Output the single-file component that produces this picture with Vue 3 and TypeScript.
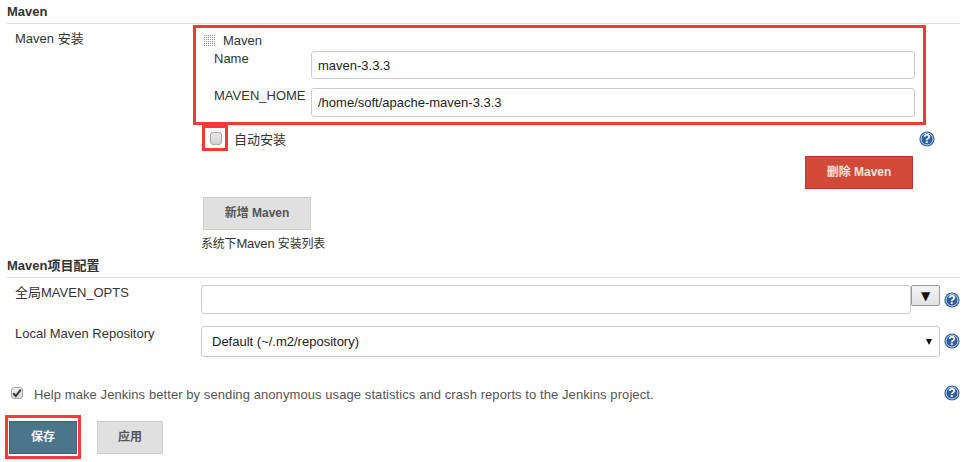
<script setup lang="ts">
const dots = Array.from({ length: 36 }, (_, i) => ({ x: (i % 6) * 2, y: Math.floor(i / 6) * 2 + 1 }))
</script>

<template>
  <div class="page">
    <div class="section-title first">Maven</div>

    <div class="install">
      <div class="row-label install-label">Maven 安装</div>
      <div class="install-body">
        <div class="red-box">
          <div class="tool-head">
            <svg class="handle" width="12" height="13" viewBox="0 0 12 13">
              <rect v-for="(d, i) in dots" :key="i" :x="d.x" :y="d.y" width="1" height="1" fill="#8f8f8f" />
            </svg>
            <span>Maven</span>
          </div>
          <div class="tool-row name-row">
            <label class="tool-label">Name</label>
            <input class="text-input" value="maven-3.3.3" />
          </div>
          <div class="tool-row home-row">
            <label class="tool-label">MAVEN_HOME</label>
            <input class="text-input" value="/home/soft/apache-maven-3.3.3" />
          </div>
        </div>

        <div class="auto-row">
          <span class="check-mark"><span class="fake-check"></span></span>
          <span class="auto-text">自动安装</span>
          <svg class="help" viewBox="0 0 16 16">
            <circle cx="8" cy="8" r="7.6" fill="#2f5f9e" />
            <circle cx="8" cy="8" r="6" fill="none" stroke="#c8d6ea" stroke-width="1" />
            <text x="8" y="12.4" text-anchor="middle" class="q">?</text>
          </svg>
        </div>

        <div class="delete-row">
          <button class="btn danger">删除 Maven</button>
        </div>

        <button class="btn neutral add">新增 Maven</button>
        <div class="hint"><span class="small">系统下</span>Maven <span class="small">安装列表</span></div>
      </div>
    </div>

    <div class="section-title second">Maven项目配置</div>

    <div class="cfg-row opts-row">
      <div class="row-label">全局MAVEN_OPTS</div>
      <input class="text-input opts-input" />
      <button class="expand">▼</button>
      <svg class="help side" viewBox="0 0 16 16">
        <circle cx="8" cy="8" r="7.6" fill="#2f5f9e" />
        <circle cx="8" cy="8" r="6" fill="none" stroke="#c8d6ea" stroke-width="1" />
        <text x="8" y="12.4" text-anchor="middle" class="q">?</text>
      </svg>
    </div>

    <div class="cfg-row repo-row">
      <div class="row-label">Local Maven Repository</div>
      <div class="fake-select">
        <span>Default (~/.m2/repository)</span>
        <span class="caret"></span>
      </div>
      <svg class="help side" viewBox="0 0 16 16">
        <circle cx="8" cy="8" r="7.6" fill="#2f5f9e" />
        <circle cx="8" cy="8" r="6" fill="none" stroke="#c8d6ea" stroke-width="1" />
        <text x="8" y="12.4" text-anchor="middle" class="q">?</text>
      </svg>
    </div>

    <div class="stats-row">
      <span class="stat-check">
        <svg width="10" height="10" viewBox="0 0 10 10">
          <path d="M1.2 5.2 L3.8 8 L8.8 1.6" fill="none" stroke="#333" stroke-width="2" />
        </svg>
      </span>
      <span class="stats-text">Help make Jenkins better by sending anonymous usage statistics and crash reports to the Jenkins project.</span>
      <svg class="help side" viewBox="0 0 16 16">
        <circle cx="8" cy="8" r="7.6" fill="#2f5f9e" />
        <circle cx="8" cy="8" r="6" fill="none" stroke="#c8d6ea" stroke-width="1" />
        <text x="8" y="12.4" text-anchor="middle" class="q">?</text>
      </svg>
    </div>

    <div class="actions">
      <div class="save-box"><button class="btn primary">保存</button></div>
      <button class="btn neutral apply">应用</button>
    </div>
  </div>
</template>

<style>
html, body { background: #fff; margin: 0; }
</style>

<style scoped>
.page {
  width: 960px;
  height: 462px;
  box-sizing: border-box;
  padding-left: 7px;
  overflow: hidden;
  font-family: "Liberation Sans", "Noto Sans CJK SC", sans-serif;
  font-size: 13px;
  color: #333;
}
.section-title {
  font-weight: 700;
  border-bottom: 1px solid #ddd;
  color: #333;
  box-sizing: border-box;
}
.first { height: 24px; line-height: 24px; }
.second { height: 22px; line-height: 20px; margin-top: 4px; }
.install { display: flex; }
.row-label { width: 186px; padding-left: 8px; box-sizing: border-box; flex: none; }
.install-label { line-height: 30px; }
.install-body { flex: 1; min-width: 0; }
.red-box {
  width: 733px;
  height: 100px;
  margin-top: 1px;
  box-sizing: border-box;
  border: 3px solid #f93838;
  padding-left: 8px;
}
.tool-head { display: flex; align-items: center; height: 24px; box-sizing: border-box; }
.handle { margin-right: 7px; }
.tool-row { display: flex; margin-left: 10px; }
.name-row { height: 28px; margin-top: -1px; }
.home-row { height: 29px; margin-top: 9px; }
.tool-label { width: 97px; flex: none; line-height: 15px; }
.text-input {
  box-sizing: border-box;
  width: 604px;
  height: 100%;
  border: 1px solid #ccc;
  border-radius: 3px;
  padding: 0 6px;
  font: 13px "Liberation Sans", sans-serif;
  color: #222;
  outline: none;
  background: #fff;
}
.auto-row { display: flex; align-items: flex-start; position: relative; height: 31px; margin-left: 9px; }
.check-mark {
  box-sizing: border-box;
  width: 26px;
  height: 26px;
  border: 3px solid #f93838;
  padding-left: 1px;
  display: flex;
  align-items: center;
  justify-content: center;
}
.fake-check {
  width: 12px;
  height: 13px;
  box-sizing: border-box;
  border: 1px solid #a8a8a8;
  border-radius: 3px;
  background: linear-gradient(#eaeaea, #d2d2d2);
}
.auto-text { margin-left: 6px; line-height: 30px; }
.help { width: 16px; height: 16px; flex: none; }
.auto-row .help { position: absolute; left: 717px; top: 6px; }
.q { font: 700 12px "Liberation Sans", sans-serif; fill: #fff; }
.delete-row { height: 41px; padding-left: 612px; }
.btn {
  box-sizing: border-box;
  font-family: "Liberation Sans", "Noto Sans CJK SC", sans-serif;
  font-size: 12px;
  font-weight: 700;
  height: 33px;
  padding: 0 0 4px;
  border-radius: 0;
  cursor: pointer;
}
.danger { width: 108px; background: #d24939; border: 1px solid #b93a2d; color: #f3e4df; }
.neutral { background: #e0e0e0; border: 1px solid #ccc; color: #555; }
.add { width: 108px; margin-left: 10px; display: block; }
.hint { margin-left: 8px; line-height: 15px; margin-top: 6px; letter-spacing: -0.2px; }
.small { font-size: 12px; }
.cfg-row { display: flex; }
.opts-row { margin-top: 7px; height: 29px; }
.repo-row { margin-top: 12px; height: 31px; }
.cfg-row .row-label { width: 194px; line-height: 15px; }
.opts-input { width: 710px; height: 29px; }
.expand {
  box-sizing: border-box;
  width: 29px;
  height: 21px;
  padding: 0;
  border: 1px solid #999;
  border-radius: 2px;
  background: linear-gradient(#f3f3f3, #e2e2e2);
  font-size: 12px;
  line-height: 18px;
  color: #111;
  font-family: "DejaVu Sans", sans-serif;
}
.side { margin-left: 4px; margin-top: 7px; }
.fake-select {
  box-sizing: border-box;
  width: 739px;
  height: 31px;
  border: 1px solid #ccc;
  border-radius: 3px;
  display: flex;
  align-items: center;
  justify-content: space-between;
  padding: 0 7px 0 10px;
  color: #222;
}
.caret {
  width: 0;
  height: 0;
  border-left: 3px solid transparent;
  border-right: 3px solid transparent;
  border-top: 6px solid #111;
}
.stats-row { display: flex; align-items: center; margin-top: 29px; height: 16px; position: relative; }
.stat-check {
  box-sizing: border-box;
  width: 12px;
  height: 12px;
  border: 1px solid #aaa;
  border-radius: 3px;
  background: linear-gradient(#eee, #d4d4d4);
  margin-left: 4px;
  margin-top: -3px;
  display: flex;
  align-items: center;
  justify-content: center;
}
.stats-text { margin-left: 11px; letter-spacing: 0.08px; color: #555; white-space: nowrap; }
.stats-row .side { margin: 0; position: absolute; left: 937px; top: -1px; }
.actions { display: flex; align-items: flex-start; margin-top: 13px; margin-left: -2px; }
.save-box {
  box-sizing: border-box;
  width: 76px;
  height: 44px;
  border: 3px solid #f93838;
  padding: 3px 0 0 1px;
}
.primary { width: 68px; background: #4b758b; border: 1px solid #3d6277; color: #f4f6f8; }
.apply { width: 66px; margin-left: 16px; margin-top: 6px; }
</style>
